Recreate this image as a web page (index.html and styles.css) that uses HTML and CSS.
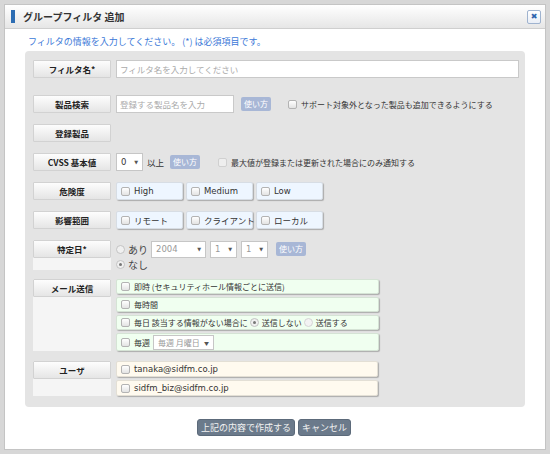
FILE: index.html
```html
<!DOCTYPE html>
<html lang="ja">
<head>
    <meta charset="UTF-8">
    <title>グループフィルタ 追加</title>
    <link rel="stylesheet" href="styles.css">
</head>
<body>
    <div class="dialog">
        <div class="dialog-title">
            <span class="title-mark"></span>
            <h1>グループフィルタ 追加</h1>
            <span class="close-btn">✖</span>
        </div>
        <div class="dialog-body">
            <p class="intro">フィルタの情報を入力してください。 (*) は必須項目です。</p>
            <div class="panel">
                <!-- フィルタ名 -->
                <div class="row row-name">
                    <div class="label-cell"><div class="label">フィルタ名*</div></div>
                    <div class="field">
                        <div class="text-input wide">フィルタ名を入力してください</div>
                    </div>
                </div>
                <!-- 製品検索 -->
                <div class="row">
                    <div class="label-cell"><div class="label">製品検索</div></div>
                    <div class="field">
                        <div class="text-input small">登録する製品名を入力</div>
                        <span class="help">使い方</span>
                        <span class="check-text support"><span class="cb"></span>サポート対象外となった製品も追加できるようにする</span>
                    </div>
                </div>
                <!-- 登録製品 -->
                <div class="row">
                    <div class="label-cell"><div class="label">登録製品</div></div>
                    <div class="field"></div>
                </div>
                <!-- CVSS -->
                <div class="row">
                    <div class="label-cell"><div class="label">CVSS 基本値</div></div>
                    <div class="field">
                        <span class="sel sel-cvss">0<i>▼</i></span>
                        <span class="plain">以上</span>
                        <span class="help">使い方</span>
                        <span class="check-text max-only"><span class="cb disabled"></span>最大値が登録または更新された場合にのみ通知する</span>
                    </div>
                </div>
                <!-- 危険度 -->
                <div class="row">
                    <div class="label-cell"><div class="label">危険度</div></div>
                    <div class="field boxes">
                        <span class="opt blue"><span class="cb"></span>High</span>
                        <span class="opt blue"><span class="cb"></span>Medium</span>
                        <span class="opt blue"><span class="cb"></span>Low</span>
                    </div>
                </div>
                <!-- 影響範囲 -->
                <div class="row">
                    <div class="label-cell"><div class="label">影響範囲</div></div>
                    <div class="field boxes">
                        <span class="opt blue"><span class="cb"></span>リモート</span>
                        <span class="opt blue"><span class="cb"></span>クライアント</span>
                        <span class="opt blue"><span class="cb"></span>ローカル</span>
                    </div>
                </div>
                <!-- 特定日 -->
                <div class="row row-date">
                    <div class="label-cell tall"><div class="label">特定日*</div></div>
                    <div class="field column">
                        <div class="date-line">
                            <span class="rd"></span><span class="radio-label">あり</span>
                            <span class="sel sel-year off">2004<i>▼</i></span>
                            <span class="sel sel-day off">1<i>▼</i></span>
                            <span class="sel sel-day off">1<i>▼</i></span>
                            <span class="help">使い方</span>
                        </div>
                        <div class="none-line">
                            <span class="rd on"></span><span class="radio-label">なし</span>
                        </div>
                    </div>
                </div>
                <!-- メール送信 -->
                <div class="row row-mail">
                    <div class="label-cell tall"><div class="label">メール送信</div></div>
                    <div class="field stack">
                        <div class="opt green line"><span class="cb"></span>即時 (セキュリティホール情報ごとに送信)</div>
                        <div class="opt green line"><span class="cb"></span>毎時間</div>
                        <div class="opt green line"><span class="cb"></span>毎日 該当する情報がない場合に <span class="rd on mini"></span>送信しない <span class="rd mini off"></span>送信する</div>
                        <div class="opt green line weekly"><span class="cb"></span>毎週 <span class="sel sel-week off">毎週 月曜日<i>▼</i></span></div>
                    </div>
                </div>
                <!-- ユーザ -->
                <div class="row row-last">
                    <div class="label-cell tall"><div class="label">ユーザ</div></div>
                    <div class="field stack">
                        <div class="opt yellow line"><span class="cb"></span>tanaka@sidfm.co.jp</div>
                        <div class="opt yellow line"><span class="cb"></span>sidfm_biz@sidfm.co.jp</div>
                    </div>
                </div>
            </div>
            <div class="actions">
                <button class="btn">上記の内容で作成する</button>
                <button class="btn">キャンセル</button>
            </div>
        </div>
    </div>
</body>
</html>
```

FILE: styles.css
```css
* {
    margin: 0;
    padding: 0;
    box-sizing: border-box;
}

body {
    background: #d7d7d7;
    font-family: "Noto Sans CJK JP", "Liberation Sans", sans-serif;
    font-size: 8.5px;
    color: #333;
    padding: 4px;
    white-space: nowrap;
}

.dialog {
    width: 542px;
    height: 446px;
    background: #fff;
    border: 1px solid #c4c4c4;
}

.dialog-title {
    height: 24px;
    display: flex;
    align-items: center;
    padding: 0 4px 0 6px;
    background: linear-gradient(#ffffff, #e6e6e6);
    border-bottom: 1px solid #cfcfcf;
}

.title-mark {
    width: 4px;
    height: 13px;
    background: #2d6db3;
    margin-right: 8px;
}

.dialog-title h1 {
    font-size: 10px;
    font-weight: bold;
    color: #333;
    flex: 1;
}

.close-btn {
    width: 14px;
    height: 14px;
    border: 1px solid #9fb3cf;
    border-radius: 2px;
    background: linear-gradient(#ffffff, #e9eef6);
    color: #2f64ad;
    font-size: 8px;
    line-height: 12px;
    text-align: center;
    font-family: "DejaVu Sans", sans-serif;
}

.dialog-body {
    padding: 6px 20px 0;
}

.intro {
    color: #3b79d8;
    font-size: 9px;
    line-height: 14px;
    padding-left: 3px;
    margin-bottom: 2px;
}

.panel {
    background: #e4e4e4;
    border-radius: 4px;
    padding: 9px 6px 11px 8px;
}

.row {
    display: flex;
    margin-bottom: 11px;
}

.row-name {
    margin-bottom: 17px;
}

.row-date {
    margin-bottom: 9px;
}

.row-mail {
    margin-bottom: 10px;
}

.row-last {
    margin-bottom: 0;
}

.label-cell {
    width: 78px;
    flex-shrink: 0;
    margin-right: 5px;
}

.label-cell.tall {
    background: #f5f5f5;
}

.label {
    height: 18px;
    line-height: 16px;
    text-align: center;
    font-weight: bold;
    color: #222;
    background: linear-gradient(#fdfdfd, #e5e5e5);
    border: 1px solid #d2d2d2;
    border-radius: 1px;
}

.field {
    flex: 1;
    display: flex;
    align-items: center;
    min-height: 18px;
}

.text-input {
    height: 18px;
    line-height: 16px;
    border: 1px solid #c9c9c9;
    background: #fff;
    color: #aaa;
    padding: 0 3px;
}

.text-input.wide {
    width: 403px;
}

.text-input.small {
    width: 118px;
}

.help {
    display: inline-block;
    background: #a8b7d6;
    color: #fff;
    border-radius: 2px;
    padding: 0 3px;
    height: 14px;
    line-height: 14px;
    font-size: 8px;
}

.text-input.small + .help {
    margin-left: 7px;
}

.check-text {
    display: inline-flex;
    align-items: center;
    color: #333;
    font-size: 8px;
}

.support {
    margin-left: 17px;
}

.max-only {
    margin-left: 18px;
}

.cb {
    display: inline-block;
    width: 9px;
    height: 9px;
    border: 1px solid #b3b3b3;
    border-radius: 2px;
    background: linear-gradient(#ffffff, #e3e3e3);
    margin-right: 4px;
    flex-shrink: 0;
}

.cb.disabled {
    border-color: #d0d0d0;
    background: #eee;
}

.sel {
    display: inline-flex;
    align-items: center;
    justify-content: space-between;
    height: 18px;
    border: 1px solid #c6c6c6;
    background: #fff;
    padding: 0 4px;
    color: #333;
    font-family: "DejaVu Sans", "Noto Sans CJK JP", sans-serif;
    font-size: 8.5px;
}

.sel i {
    font-style: normal;
    font-size: 5px;
    color: #555;
}

.sel.off {
    color: #999;
}

.sel-cvss {
    width: 27px;
}

.plain {
    margin: 0 6px 0 4px;
}

.field.boxes {
    gap: 3px;
}

.opt {
    display: flex;
    align-items: center;
    height: 18px;
    padding: 0 4px;
    border: 1px solid #d7dde4;
    border-radius: 2px;
    box-shadow: 1px 1px 1px rgba(0, 0, 0, 0.25);
}

.opt.blue {
    width: 67px;
    background: #eef6ff;
    font-family: "DejaVu Sans", "Noto Sans CJK JP", sans-serif;
}

.field.column {
    flex-direction: column;
    align-items: flex-start;
}

.date-line {
    display: flex;
    align-items: center;
    height: 18px;
}

.date-line .sel {
    height: 17px;
    margin-right: 4px;
}

.sel-year {
    width: 55px;
    margin-left: 3px;
}

.sel-day {
    width: 27px;
}

.date-line .help {
    margin-left: 4px;
}

.none-line {
    display: flex;
    align-items: center;
    height: 12px;
}

.rd {
    display: inline-block;
    width: 9px;
    height: 9px;
    border-radius: 50%;
    border: 1px solid #c3c3c3;
    background: #f0f0f0;
    margin-right: 3px;
    position: relative;
    flex-shrink: 0;
}

.rd.on::after {
    content: "";
    position: absolute;
    left: 2px;
    top: 2px;
    width: 3px;
    height: 3px;
    border-radius: 50%;
    background: #777;
}

.rd.mini {
    margin-left: 2px;
}

.rd.off {
    border-color: #d5d5d5;
    background: #f3f3f3;
}

.radio-label {
    font-size: 10px;
    color: #444;
}

.field.stack {
    flex-direction: column;
    align-items: flex-start;
    gap: 3px;
}

.opt.line {
    width: 263px;
    height: 15px;
}

.opt.green {
    background: #f0fff0;
    border-color: #d5e3d5;
    font-size: 8px;
}

.opt.weekly {
    height: 18px;
}

.sel-week {
    height: 15px;
    width: 61px;
    margin-left: 3px;
    font-family: "Noto Sans CJK JP", sans-serif;
    font-size: 8px;
}

.opt.yellow {
    background: #fffaef;
    border-color: #e3dfd5;
    height: 16px;
    width: 262px;
    font-family: "DejaVu Sans", sans-serif;
    font-size: 8.5px;
}

.actions {
    display: flex;
    justify-content: center;
    gap: 3px;
    margin-top: 12px;
    padding-right: 2px;
}

.btn {
    font-family: "Noto Sans CJK JP", sans-serif;
    font-size: 9px;
    color: #f2f2f2;
    background: #6b7a8b;
    border: 1px solid #5c6a7a;
    border-radius: 3px;
    height: 17px;
    padding: 0 3px;
}
```
